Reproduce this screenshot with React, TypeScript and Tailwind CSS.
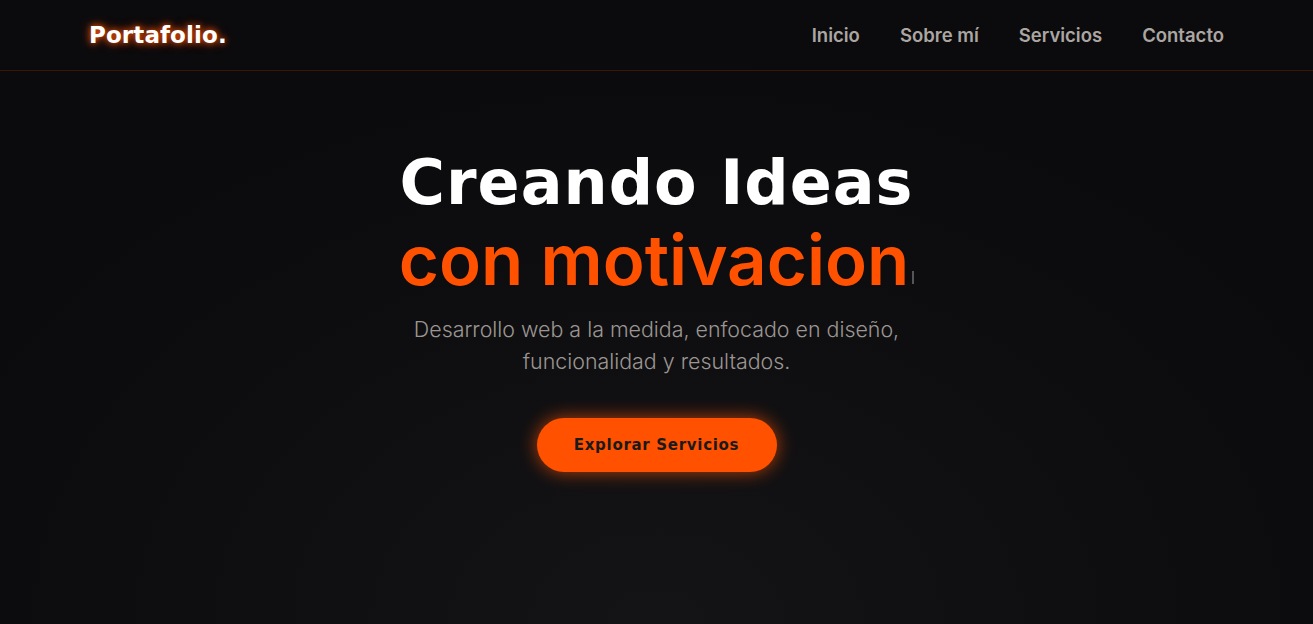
import React from "react";

const navLinks = ["Inicio", "Sobre mí", "Servicios", "Contacto"];

export default function App() {
  return (
    <div className="min-h-[624px] w-full bg-[radial-gradient(ellipse_60%_90%_at_50%_100%,#141416_0%,#0d0d0f_70%,#0b0b0d_100%)] font-['Inter',sans-serif] text-white">
      {/* Header */}
      <header className="h-[71px] border-b border-[#3b1709]">
        <div className="mx-auto flex h-full max-w-[1135px] items-center justify-between">
          <a
            href="#"
            className="font-['DejaVu_Sans',sans-serif] text-[23px] font-bold tracking-[0.1px] text-white [text-shadow:0_0_6px_#ff5100,0_0_12px_rgba(255,81,0,0.6)]"
          >
            Portafolio.
          </a>
          <nav className="flex gap-[40px] pt-[1px]">
            {navLinks.map((link) => (
              <a
                key={link}
                href="#"
                className="text-[18.5px] font-semibold text-[#aca6a2]"
              >
                {link}
              </a>
            ))}
          </nav>
        </div>
      </header>

      {/* Hero */}
      <section className="flex flex-col items-center pt-[76px] text-center">
        <h1 className="font-['DejaVu_Sans',sans-serif] text-[62px] font-bold leading-[72px] tracking-[1px] text-white">
          Creando Ideas
        </h1>
        <div className="mt-[1px] flex items-end">
          <span className="text-[69px] font-semibold leading-[80px] text-[#ff5100]">
            con motivacion
          </span>
          <span className="mb-[16px] ml-[3px] h-[13px] w-[2px] bg-[#555]" />
        </div>
        <p className="mt-[13px] max-w-[530px] text-[21.4px] font-light leading-[32px] text-[#9c9692]">
          Desarrollo web a la medida, enfocado en diseño, funcionalidad y resultados.
        </p>
        <button className="mt-[41px] h-[54px] w-[240px] rounded-full bg-[#ff5100] font-['DejaVu_Sans',sans-serif] text-[15px] font-bold tracking-[0.7px] text-[#1a1a1a] shadow-[0_0_18px_rgba(255,81,0,0.7)]">
          Explorar Servicios
        </button>
      </section>
    </div>
  );
}
